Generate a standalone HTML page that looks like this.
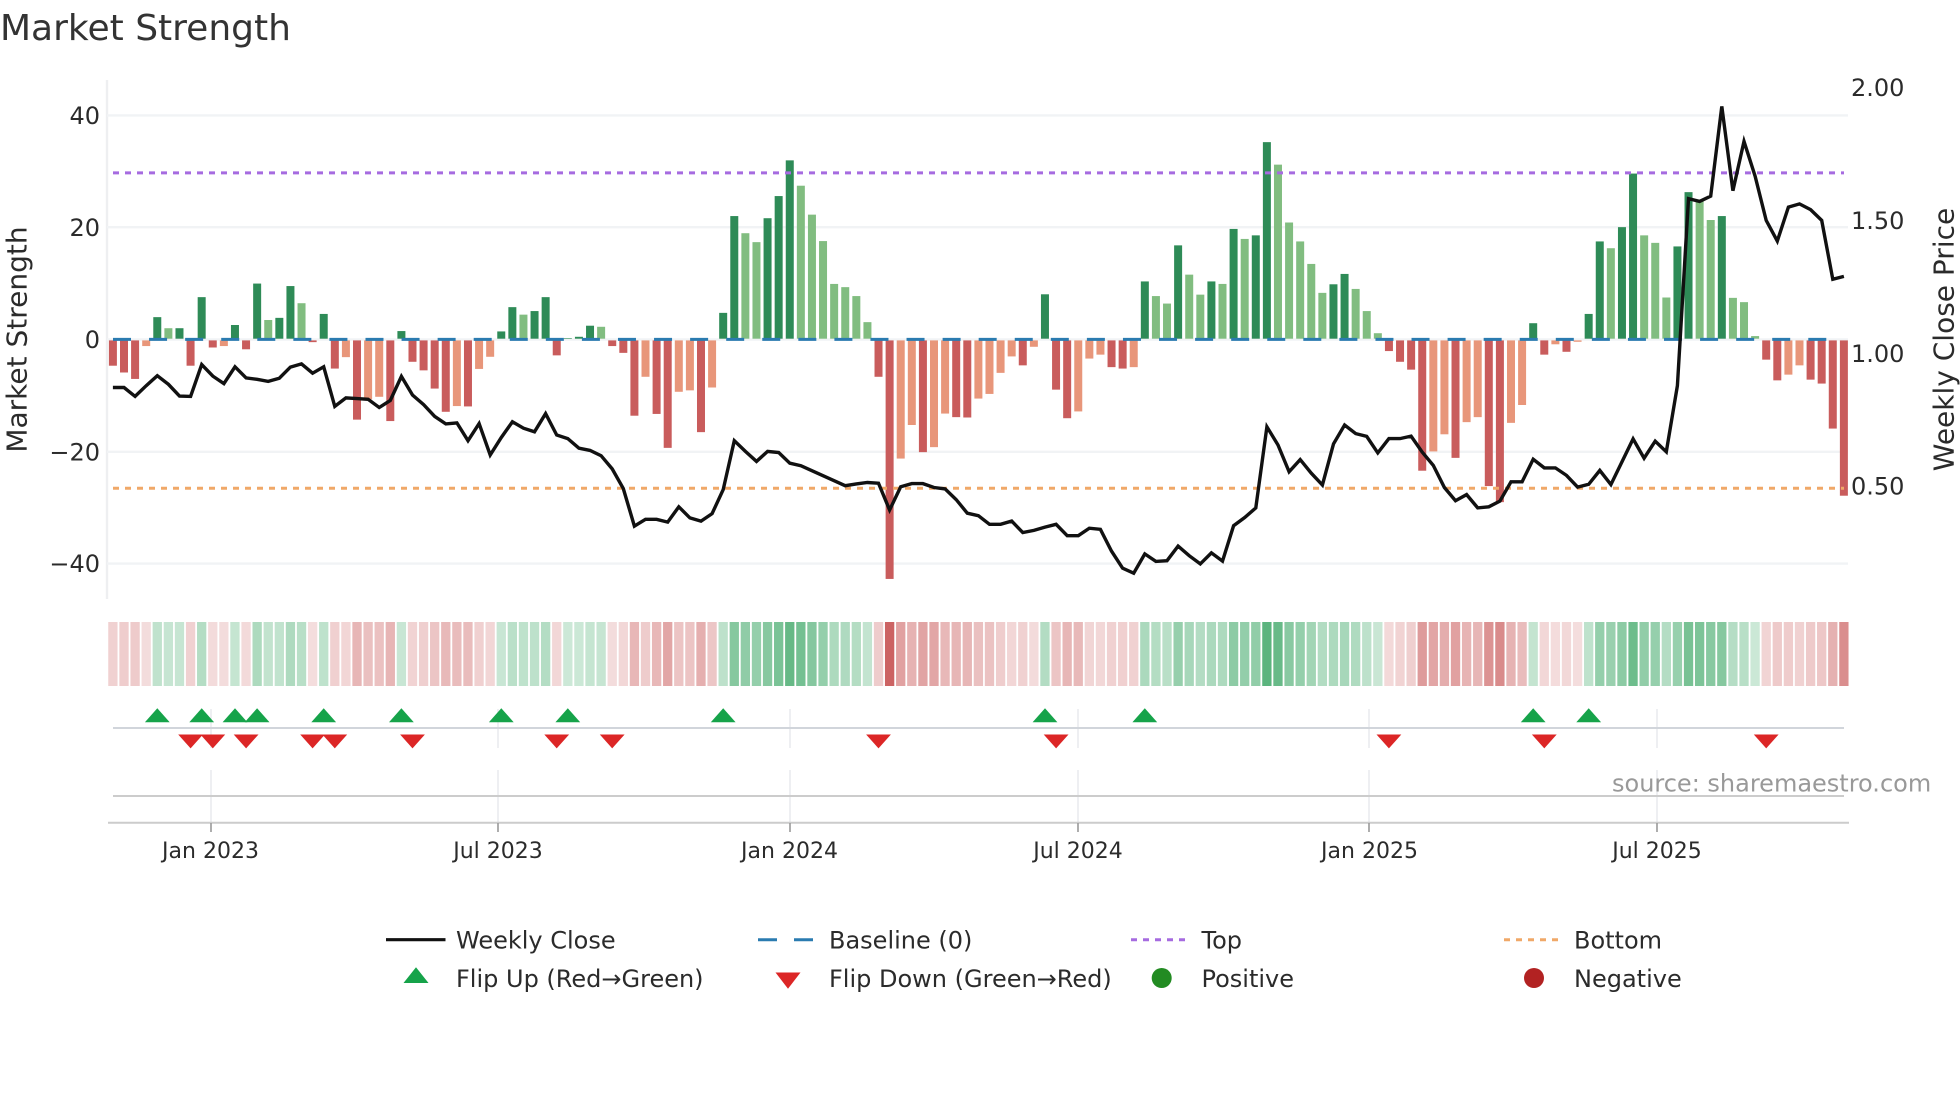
<!DOCTYPE html>
<html lang="en">
<head>
<meta charset="utf-8">
<title>Market Strength</title>
<style>
html,body{margin:0;padding:0;background:#fff;width:1960px;height:1102px;overflow:hidden}
svg{display:block}
text{font-family:"DejaVu Sans","Liberation Sans",sans-serif;fill:#2b2b2b}
</style>
</head>
<body>
<svg id="c" xmlns="http://www.w3.org/2000/svg" width="1960" height="1102" viewBox="0 0 1960 1102">
  <rect width="1960" height="1102" fill="#fff"/>
  <text x="0" y="40" font-size="36" style="fill:#333">Market Strength</text>

  <!-- grid -->
  <g stroke="#f1f3f5" stroke-width="2.4" fill="none">
    <line x1="107" y1="80" x2="107" y2="599" stroke="#eeeff1"/>
    <line x1="107" y1="115.4" x2="1848" y2="115.4"/>
    <line x1="107" y1="227.2" x2="1848" y2="227.2"/>
    <line x1="107" y1="339.5" x2="1848" y2="339.5"/>
    <line x1="107" y1="451.8" x2="1848" y2="451.8"/>
    <line x1="107" y1="563.6" x2="1848" y2="563.6"/>
  </g>

  <g id="bars"></g>

  <line x1="113" y1="172.9" x2="1844" y2="172.9" stroke="#a66be0" stroke-width="3" stroke-dasharray="6 6"/>
  <line x1="113" y1="488.2" x2="1844" y2="488.2" stroke="#f0a868" stroke-width="3" stroke-dasharray="6 6"/>
  <line x1="113" y1="339.4" x2="1844" y2="339.4" stroke="#2a7bb0" stroke-width="3" stroke-dasharray="18 18.07"/>
  <polyline id="price" fill="none" stroke="#111" stroke-width="3.4" stroke-linejoin="miter" stroke-miterlimit="4"/>

  <!-- y ticks -->
  <g font-size="24" text-anchor="end">
    <text x="100" y="124">40</text>
    <text x="100" y="235.8">20</text>
    <text x="100" y="348">0</text>
    <text x="100" y="460.3">−20</text>
    <text x="100" y="572.2">−40</text>
  </g>
  <g font-size="24">
    <text x="1851" y="96">2.00</text>
    <text x="1851" y="229">1.50</text>
    <text x="1851" y="362">1.00</text>
    <text x="1851" y="494.5">0.50</text>
  </g>
  <text transform="translate(26.5 339.5) rotate(-90)" text-anchor="middle" font-size="28">Market Strength</text>
  <text transform="translate(1953.3 339.5) rotate(-90)" text-anchor="middle" font-size="28">Weekly Close Price</text>

  <g id="strip"></g>

  <!-- vertical grid in lower panels -->
  <g stroke="#e8eaed" stroke-width="1.5">
    <path d="M211 709V748M211 770V822M498 709V748M498 770V822M790 709V748M790 770V822M1078 709V748M1078 770V822M1369 709V748M1369 770V822M1657 709V748M1657 770V822"/>
  </g>
  <line x1="113" y1="728" x2="1844" y2="728" stroke="#d1d5db" stroke-width="2"/>
  <line x1="113" y1="796" x2="1844" y2="796" stroke="#cccccc" stroke-width="2"/>
  <line x1="108" y1="822.7" x2="1849" y2="822.7" stroke="#cccccc" stroke-width="2"/>
  <path d="M211 823V832M498 823V832M790 823V832M1078 823V832M1369 823V832M1657 823V832" stroke="#999" stroke-width="1.6"/>
  <g id="marks"></g>

  <g font-size="22" text-anchor="middle">
    <text x="210.5" y="858">Jan 2023</text>
    <text x="498" y="858">Jul 2023</text>
    <text x="789.5" y="858">Jan 2024</text>
    <text x="1078" y="858">Jul 2024</text>
    <text x="1369.5" y="858">Jan 2025</text>
    <text x="1657" y="858">Jul 2025</text>
  </g>
  <text x="1612" y="791.7" font-size="24" style="fill:#999">source: sharemaestro.com</text>

  <!-- legend -->
  <line x1="386" y1="939.7" x2="445.5" y2="939.7" stroke="#111" stroke-width="3.2"/>
  <path d="M758 939.7H777M794 939.7H813" stroke="#2a7bb0" stroke-width="3"/>
  <line x1="1131" y1="939.7" x2="1186" y2="939.7" stroke="#a66be0" stroke-width="3" stroke-dasharray="6 6"/>
  <line x1="1504" y1="939.7" x2="1558.5" y2="939.7" stroke="#f0a868" stroke-width="3" stroke-dasharray="6 6"/>
  <path d="M416 967.2L428.5 983H403.5Z" fill="#16a34a"/>
  <path d="M788 988.7L775.5 972.5H800.5Z" fill="#dc2626"/>
  <ellipse cx="1161.7" cy="978" rx="10" ry="10" fill="#228b22"/>
  <ellipse cx="1534" cy="978" rx="10" ry="10" fill="#b22222"/>
  <g font-size="24">
    <text x="456" y="948.5">Weekly Close</text>
    <text x="829" y="948.5">Baseline (0)</text>
    <text x="1201.5" y="948.5">Top</text>
    <text x="1574" y="948.5">Bottom</text>
    <text x="456" y="986.8">Flip Up (Red→Green)</text>
    <text x="829" y="986.8">Flip Down (Green→Red)</text>
    <text x="1201.5" y="986.8">Positive</text>
    <text x="1574" y="986.8">Negative</text>
  </g>
</svg>
<script>
(function(){
var NS="http://www.w3.org/2000/svg";
function el(p,n,a){var e=document.createElementNS(NS,n);for(var k in a)e.setAttribute(k,a[k]);p.appendChild(e);return e;}
/* positive = dark bar, negative = light bar; abs value is end y in 2.8x coordinates, 782 = zero */
var B=[856,875,893,-801,720,-751,751,856,664,805,-801,742,810,626,-728,722,633,-681,790,711,864,-832,1007,-950,-943,1011,759,845,869,920,985,-969,970,-865,-831,760,692,-713,703,664,827,779,775,744,-747,801,820,996,-887,991,1086,-929,-925,1042,-917,708,437,-485,-510,443,381,281,-352,-433,-507,-627,-636,-661,-734,887,1453,-1116,-1022,1098,-1084,-990,1000,1001,-948,-935,-876,-830,855,-803,656,923,1003,-984,-836,-825,860,864,-860,620,-661,-682,519,-601,-657,620,-627,473,-501,491,230,-293,-455,-508,-571,-652,628,599,-641,-703,-765,815,845,867,1150,-1096,-1048,1114,-1014,-1000,1193,1238,-1016,-966,737,825,-796,817,-789,711,508,-527,468,318,-491,-512,-665,522,370,-395,-448,437,-666,-678,-773,839,897,-881,-855,895,906,1032,1220];
var L=[917,917,942,912,884,908,941,942,853,885,906,859,890,894,900,891,860,851,877,859,970,946,948,950,973,953,886,938,965,998,1019,1016,1066,1018,1106,1057,1013,1031,1041,990,1050,1060,1087,1093,1108,1145,1200,1305,1286,1286,1294,1251,1282,1291,1270,1203,1066,1096,1124,1096,1099,1129,1136,1150,1164,1178,1192,1187,1183,1185,1260,1195,1186,1186,1197,1201,1231,1269,1276,1300,1300,1291,1323,1317,1308,1300,1332,1332,1311,1314,1375,1423,1437,1383,1404,1402,1361,1388,1411,1380,1403,1304,1281,1254,1027,1078,1153,1119,1157,1190,1075,1022,1046,1054,1100,1060,1060,1053,1098,1135,1197,1234,1217,1254,1251,1235,1181,1181,1118,1142,1142,1163,1196,1188,1149,1189,1125,1061,1115,1067,1097,912,388,396,381,130,366,228,325,449,507,412,403,419,449,614,606];
var bars=document.getElementById("bars"),strip=document.getElementById("strip"),marks=document.getElementById("marks");
function X(i){return 112.9+11.096*i;}
for(var i=0;i<B.length;i++){
  var z=Math.abs(B[i]),dark=B[i]>0,pos=z<782,x=X(i),y=60+z/2.8,col;
  if(pos)col=dark?"#2e8b57":"#81bd80";else col=dark?"#c95c5c":"#e8967a";
  var top=pos?y:340.4,bot=pos?338.7:y;
  el(bars,"rect",{x:(x-4).toFixed(2),y:top.toFixed(2),width:8,height:Math.max(0.6,bot-top).toFixed(2),fill:col});
  var v=Math.abs(782-z)/2.8/5.61,f=pos?"rgb(46,160,90)":"rgb(185,40,40)",a=pos?0.24+0.0155*v:0.15+0.0135*v;
  el(strip,"rect",{x:(x-4.65).toFixed(2),y:622,width:9.3,height:64,fill:f,"fill-opacity":a.toFixed(3)});
}
var pts=[];
for(i=0;i<L.length;i++)pts.push(X(i).toFixed(1)+","+(60+L[i]/2.8).toFixed(1));
document.getElementById("price").setAttribute("points",pts.join(" "));
[4,8,11,13,19,26,35,41,55,84,93,128,133].forEach(function(k){var x=X(k);
  el(marks,"path",{d:"M"+x.toFixed(1)+" 708.2L"+(x+12.4).toFixed(1)+" 722.2H"+(x-12.4).toFixed(1)+"Z",fill:"#16a34a"});});
[7,9,12,18,20,27,40,45,69,85,115,129,149].forEach(function(k){var x=X(k);
  el(marks,"path",{d:"M"+x.toFixed(1)+" 748.4L"+(x+12.4).toFixed(1)+" 734.5H"+(x-12.4).toFixed(1)+"Z",fill:"#dc2626"});});
})();
</script>
</body>
</html>
